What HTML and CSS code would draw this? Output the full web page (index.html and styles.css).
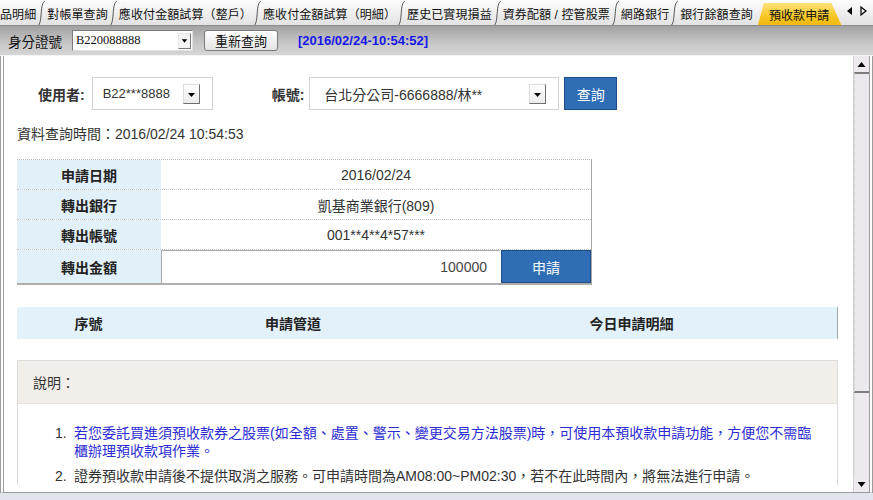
FILE: index.html
```html
<!DOCTYPE html>
<html lang="zh-Hant">
<head>
<meta charset="utf-8">
<title>預收款申請</title>
<link rel="stylesheet" href="styles.css">
</head>
<body>
<div class="page">
  <div class="tabs">
    <span class="tab first">品明細</span><svg class="sep" viewBox="0 0 7 25"><path d="M0.5 25 C3 23 3 14 3.5 10 C4 5 5 2 7 1"/></svg>
    <span class="tab">對帳單查詢</span><svg class="sep" viewBox="0 0 7 25"><path d="M0.5 25 C3 23 3 14 3.5 10 C4 5 5 2 7 1"/></svg>
    <span class="tab">應收付金額試算（整戶）</span><svg class="sep" viewBox="0 0 7 25"><path d="M0.5 25 C3 23 3 14 3.5 10 C4 5 5 2 7 1"/></svg>
    <span class="tab">應收付金額試算（明細）</span><svg class="sep" viewBox="0 0 7 25"><path d="M0.5 25 C3 23 3 14 3.5 10 C4 5 5 2 7 1"/></svg>
    <span class="tab">歷史已實現損益</span><svg class="sep" viewBox="0 0 7 25"><path d="M0.5 25 C3 23 3 14 3.5 10 C4 5 5 2 7 1"/></svg>
    <span class="tab">資券配額 / 控管股票</span><svg class="sep" viewBox="0 0 7 25"><path d="M0.5 25 C3 23 3 14 3.5 10 C4 5 5 2 7 1"/></svg>
    <span class="tab">網路銀行</span><svg class="sep" viewBox="0 0 7 25"><path d="M0.5 25 C3 23 3 14 3.5 10 C4 5 5 2 7 1"/></svg>
    <span class="tab">銀行餘額查詢</span>
    <span class="tab active">預收款申請</span>
    <span class="arrows"><svg viewBox="0 0 28 25" width="28" height="25"><polygon points="9,7 9,15 4,11" fill="#000"/><polygon points="18,7 18,15 23,11" fill="none" stroke="#000" stroke-width="1.2"/></svg></span>
  </div>

  <div class="toolbar">
    <span class="tlabel">身分證號</span>
    <div class="tselect"><span class="tsel-text">B220088888</span><span class="tdrop"><svg viewBox="0 0 12 15" width="12" height="15"><polygon points="3,6 9,6 6,10" fill="#000"/></svg></span></div>
    <button class="tbtn">重新查詢</button>
    <span class="stamp">[2016/02/24-10:54:52]</span>
  </div>

  <div class="main">
    <div class="content">
      <div class="query">
        <span class="qlabel">使用者:</span>
        <div class="sel sel-user"><span class="sel-text">B22***8888</span><span class="drop"><svg viewBox="0 0 15 18" width="15" height="18"><polygon points="4,8 11,8 7.5,12" fill="#000"/></svg></span></div>
        <span class="qlabel acct">帳號:</span>
        <div class="sel sel-acct"><span class="sel-text">台北分公司-6666888/林**</span><span class="drop"><svg viewBox="0 0 15 18" width="15" height="18"><polygon points="4,8 11,8 7.5,12" fill="#000"/></svg></span></div>
        <button class="bluebtn qbtn">查詢</button>
      </div>

      <div class="qtime">資料查詢時間：2016/02/24 10:54:53</div>

      <div class="form">
        <div class="frow"><div class="flabel">申請日期</div><div class="fval">2016/02/24</div></div>
        <div class="frow"><div class="flabel">轉出銀行</div><div class="fval">凱基商業銀行(809)</div></div>
        <div class="frow"><div class="flabel">轉出帳號</div><div class="fval">001**4**4*57***</div></div>
        <div class="frow last"><div class="flabel">轉出金額</div><div class="fval amount"><div class="amt-input">100000</div><button class="bluebtn applybtn">申請</button></div></div>
      </div>

      <div class="grid-head">
        <div class="gh">序號</div>
        <div class="gh">申請管道</div>
        <div class="gh">今日申請明細</div>
      </div>

      <div class="desc">
        <div class="desc-head">說明：</div>
        <ol class="desc-list">
          <li class="blue"><span class="num">1.</span><span class="txt">若您委託買進須預收款券之股票(如全額、處置、警示、變更交易方法股票)時，可使用本預收款申請功能，方便您不需臨櫃辦理預收款項作業。</span></li>
          <li><span class="num">2.</span><span class="txt">證券預收款申請後不提供取消之服務。可申請時間為AM08:00~PM02:30，若不在此時間內，將無法進行申請。</span></li>
        </ol>
      </div>
    </div>
    <div class="sb">
      <div class="sb-btn"><svg viewBox="0 0 15 16" width="15" height="16"><polygon points="3.5,11 11.5,11 7.5,6" fill="#000"/></svg></div>
      <div class="sb-thumb"></div>
      <div class="sb-track"></div>
      <div class="sb-btn"><svg viewBox="0 0 15 16" width="15" height="16"><polygon points="3.5,6 11.5,6 7.5,11" fill="#000"/></svg></div>
    </div>
  </div>
  <div class="bottom-strip"></div>
</div>
</body>
</html>
```

FILE: styles.css
```css
* { box-sizing: border-box; }
html, body { margin: 0; padding: 0; }
body {
  width: 873px;
  height: 500px;
  overflow: hidden;
  background: #fff;
  font-family: Arial, "Liberation Sans", "Noto Sans CJK TC", sans-serif;
  color: #333;
}
.page {
  width: 873px;
  height: 500px;
  display: flex;
  flex-direction: column;
}

/* ---------- tabs ---------- */
.tabs {
  height: 26px;
  flex: none;
  display: flex;
  align-items: stretch;
  background: linear-gradient(#fdfdfd, #e2e2e2);
  border-bottom: 1px solid #8c8c8c;
  font-size: 12px;
  letter-spacing: 0.1px;
  color: #111;
  white-space: nowrap;
  overflow: hidden;
}
.tab {
  display: flex;
  align-items: center;
  padding: 2px 2px 0 2px;
  flex: none;
}
.tab.first { padding-left: 0; }
.sep {
  width: 7px;
  height: 25px;
  flex: none;
}
.sep path {
  fill: none;
  stroke: #555;
  stroke-width: 1;
}
.tab.active {
  margin-left: 3px;
  padding: 4px 12px 0 11px;
  background: linear-gradient(#ffe98c, #f6c420 70%, #f0b810);
  clip-path: polygon(0 100%, 6px 3px, calc(100% - 10px) 3px, 100% 100%);
  color: #111;
}
.arrows {
  margin-left: auto;
  width: 30px;
  display: flex;
  align-items: center;
  flex: none;
}

/* ---------- toolbar ---------- */
.toolbar {
  height: 30px;
  flex: none;
  display: flex;
  align-items: center;
  padding-left: 8px;
  background: linear-gradient(#a2a2a2, #c4c4c4 55%, #d6d6d6);
  border-bottom: 1px solid #f4f4f4;
}
.tlabel {
  font-size: 13.5px;
  color: #111;
  margin-right: 10px;
}
.tselect {
  width: 121px;
  height: 21px;
  background: #fff;
  border: 1px solid #7d7d7d;
  border-right-color: #e0e0e0;
  border-bottom-color: #e0e0e0;
  display: flex;
  align-items: center;
  justify-content: space-between;
  padding: 0 1px 0 3px;
}
.tsel-text {
  font-family: "Liberation Serif", "Times New Roman", serif;
  font-size: 12.5px;
  color: #111;
}
.tdrop {
  width: 13px;
  height: 16px;
  display: flex;
  align-items: center;
  justify-content: center;
  background: #f4f4f4;
  border: 1px solid #e8e8e8;
  border-right-color: #777;
  border-bottom-color: #777;
}
.tbtn {
  margin-left: 11px;
  width: 74px;
  height: 21px;
  padding: 0;
  border: 1px solid #7a7a7a;
  border-radius: 3px;
  background: linear-gradient(#ffffff, #e4e4e4);
  font-family: Arial, "Liberation Sans", "Noto Sans CJK TC", sans-serif;
  font-size: 13px;
  color: #111;
}
.stamp {
  margin-left: 20px;
  font-size: 13px;
  font-weight: bold;
  color: #1717e8;
}

/* ---------- main frame ---------- */
.main {
  height: 437px;
  flex: none;
  display: flex;
  border-left: 4px double #9c9c9c;
  border-right: 4px double #9c9c9c;
  border-bottom: 1px solid #9a9a9a;
}
.content {
  flex: 1;
  overflow: hidden;
  padding: 0 15px 0 13px;
  font-size: 14px;
}
.bottom-strip {
  flex: 1;
  background: #e2e4ec;
}

/* query row */
.query {
  margin-top: 21px;
  height: 33px;
  display: flex;
  align-items: center;
}
.qlabel {
  margin-left: 21px;
  margin-right: 7px;
  font-weight: bold;
  color: #333;
}
.qlabel.acct {
  margin-left: 59px;
  margin-right: 5px;
}
.sel {
  height: 33px;
  border: 1px solid #d2d2d2;
  display: flex;
  align-items: center;
  justify-content: space-between;
  padding: 0 12px 0 10px;
  color: #333;
}
.sel-user { width: 121px; }
.sel-user .sel-text { font-size: 13px; }
.sel-acct { width: 250px; padding-left: 14px; }
.drop {
  width: 17px;
  height: 20px;
  display: flex;
  align-items: center;
  justify-content: center;
  background: linear-gradient(#ffffff, #ececec);
  border: 1px solid #dcdcdc;
  border-right-color: #6e6e6e;
  border-bottom-color: #6e6e6e;
}
.bluebtn {
  padding: 0;
  border: 1px solid #1d4e8a;
  background: #2f6db4;
  color: #fff;
  font-family: Arial, "Liberation Sans", "Noto Sans CJK TC", sans-serif;
  font-size: 14px;
}
.qbtn {
  margin-left: 5px;
  width: 53px;
  height: 33px;
}

.qtime {
  margin-top: 15px;
  line-height: 18px;
  color: #333;
}

/* form table */
.form {
  margin-top: 16px;
  width: 575px;
  border-top: 1px dotted #b8b8b8;
  border-right: 1px solid #a8a8a8;
  border-bottom: 2px solid #aeaeae;
}
.frow {
  display: grid;
  grid-template-columns: 144px 1fr;
  height: 30px;
  border-bottom: 1px dotted #c4c4c4;
}
.frow.last {
  height: 33px;
  border-bottom: none;
}
.flabel {
  background: #e2f0f9;
  font-weight: bold;
  color: #222;
  display: flex;
  align-items: center;
  justify-content: center;
}
.fval {
  display: flex;
  align-items: center;
  justify-content: center;
  color: #333;
}
.fval.amount {
  justify-content: flex-start;
  align-items: stretch;
}
.amt-input {
  width: 339px;
  border-top: 1px solid #a9a9a9;
  border-left: 1px solid #a9a9a9;
  display: flex;
  align-items: center;
  justify-content: flex-end;
  padding-right: 13px;
  color: #444;
}
.applybtn {
  margin-left: 1px;
  width: 90px;
}

/* grid header */
.grid-head {
  margin-top: 22px;
  width: 821px;
  height: 32px;
  background: #e3f1fa;
  border-right: 1px solid #a8a8a8;
  display: grid;
  grid-template-columns: 143px 266px 1fr;
}
.gh {
  display: flex;
  align-items: center;
  justify-content: center;
  font-weight: bold;
  color: #222;
}

/* description */
.desc {
  margin-top: 21px;
  width: 821px;
  border: 1px solid #dcdcdc;
  border-bottom: none;
}
.desc-head {
  height: 43px;
  background: #f2eeea;
  border-bottom: 1px solid #e6e2de;
  display: flex;
  align-items: center;
  padding-left: 15px;
  color: #333;
}
.desc-list {
  margin: 0;
  padding: 20px 18px 0 37px;
  list-style: none;
}
.desc-list li {
  display: flex;
  line-height: 18px;
  color: #333;
  margin-bottom: 7px;
}
.desc-list li.blue { color: #2c2cd4; }
.num {
  width: 19px;
  flex: none;
  color: #333;
}
.txt { flex: 1; }

/* scrollbar */
.sb {
  width: 16px;
  flex: none;
  display: flex;
  flex-direction: column;
  background: #eeeaf0;
  border-left: 1px solid #d0d0d0;
}
.sb-btn {
  height: 16px;
  flex: none;
  display: flex;
  align-items: center;
  justify-content: center;
}
.sb-thumb {
  height: 321px;
  flex: none;
  background: #ebe8ee;
  border-top: 2px solid #7c7c7c;
  border-bottom: 2px solid #7c7c7c;
  border-left: 1px dotted #c8c8c8;
}
.sb-track {
  flex: 1;
  border-left: 1px dotted #d8d8d8;
}
```
